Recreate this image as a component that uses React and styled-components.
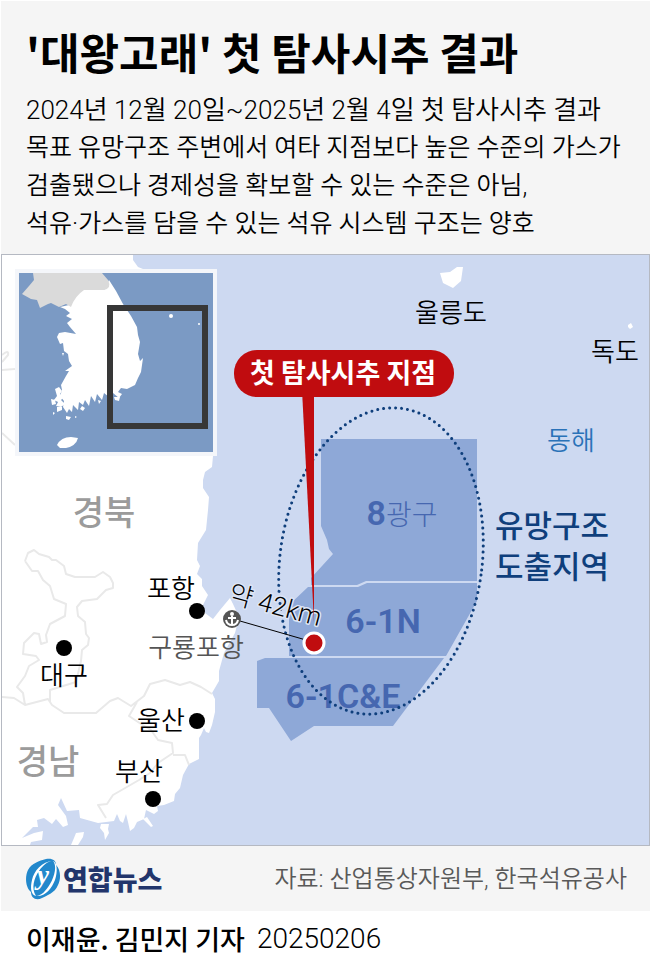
import React from "react";
import styled, { createGlobalStyle } from "styled-components";

const GlobalStyle = createGlobalStyle`
  * { box-sizing: border-box; }
  body {
    margin: 0;
    background: #ffffff;
    color: #000000;
    font-family: "Noto Sans CJK KR", "Noto Sans", sans-serif;
  }
`;

const mixedFont = 'Roboto, "Noto Sans CJK KR", sans-serif';

const Page = styled.main`
  width: 100%;
  padding: 1px 1px 0;
  background: #ffffff;
`;

const Header = styled.header`
  padding: 20px 25px 11px;
  background: #f5f5f5;
`;

const Title = styled.h1`
  margin: 0 0 10px;
  font-size: 43px;
  font-weight: 700;
  line-height: 60px;
`;

const Summary = styled.p`
  margin: 0;
  font-family: ${mixedFont};
  font-size: 25px;
  font-weight: 350;
  line-height: 38px;
`;

const Line = styled.span`
  display: block;
  font-size: ${(p) => (p.$lead ? 26 : 25)}px;
  white-space: nowrap;
`;

const MapFigure = styled.figure`
  margin: 0;
  border: 1px solid #b5b9c2;
  background: #cdd9f1;
`;

const MapDrawing = styled.svg`
  display: block;
  width: 100%;
  height: auto;
`;

const Place = styled.text`
  font-size: ${(p) => p.$size || 26}px;
  font-weight: ${(p) => p.$weight || 350};
  fill: ${(p) => p.$color || "#000000"};
  text-anchor: middle;
`;

const BlockName = styled.text`
  font-family: ${mixedFont};
  font-size: 34px;
  font-weight: 600;
  fill: #4667b0;
  text-anchor: middle;
`;

const Thin = styled.tspan`
  font-size: 28px;
  font-weight: 300;
`;

const Distance = styled.text`
  font-family: ${mixedFont};
  font-size: 26px;
  font-weight: 300;
  fill: #000000;
  stroke: #dde5f5;
  stroke-width: 3px;
  stroke-linejoin: round;
  paint-order: stroke;
  text-anchor: middle;
`;

const SourceBar = styled.section`
  display: flex;
  align-items: center;
  justify-content: space-between;
  min-height: 65px;
  padding: 0 23px 0 24px;
  background: #f5f5f5;
`;

const Brand = styled.div`
  display: flex;
  align-items: center;
  gap: 2px;
  color: #22356b;
  font-size: 27px;
  font-weight: 900;
  line-height: 36px;
`;

const BrandMark = styled.svg`
  width: 36px;
  height: 42px;
`;

const MarkLetter = styled.text`
  font-family: "Liberation Serif", serif;
  font-size: 27px;
  font-style: italic;
  font-weight: 700;
  fill: #ffffff;
  text-anchor: middle;
`;

const Source = styled.p`
  margin: 0;
  color: #595959;
  font-family: ${mixedFont};
  font-size: 24px;
  font-weight: 350;
  line-height: 36px;
`;

const Byline = styled.footer`
  display: flex;
  gap: 12px;
  padding: 8px 25px 15px;
  font-size: 27px;
  line-height: 40px;
`;

const Authors = styled.span`
  font-weight: 500;
`;

const PublishDate = styled.time`
  font-family: ${mixedFont};
  font-size: 28px;
  font-weight: 300;
`;

const cities = [
  { name: "포항", x: 171, y: 598, cx: 197, cy: 611 },
  { name: "대구", x: 64, y: 685, cx: 64, cy: 648 },
  { name: "울산", x: 161, y: 730, cx: 197, cy: 721 },
  { name: "부산", x: 139, y: 781, cx: 153, cy: 799 },
];

function Inset() {
  return (
    <g>
      <rect x="15" y="269" width="202" height="187" fill="#f4f6fa" />
      <rect x="19" y="273" width="194" height="179" fill="#7b9ac4" />
      <path
        fill="#ffffff"
        d="M109 280 L116 291 L123 304 L131 316 L137 327 L138 335 L140 342 L138 354 L140 361 L143 358 L141 372 L138 378 L135 385 L127 389 L121 388 L118 392 L122 394 L119 398 L113 393 L109 397 L104 393 L102 400 L97 394 L95 402 L91 396 L89 406 L85 400 L83 405 L79 402 L78 410 L73 405 L72 412 L69 409 L67 413 L63 407 L64 401 L60 396 L62 390 L61 385 L66 376 L69 371 L65 371 L72 366 L69 361 L68 354 L64 351 L63 343 L60 344 L57 337 L59 333 L65 332 L76 334 L70 327 L67 323 L72 319 L66 316 L70 313 L65 309 L60 307 L69 305 L74 295 L80 290 L104 290 Z"
      />
      <path
        fill="#dadada"
        d="M33 273 L102 273 L108 280 Q112 288 104 290 L84 290 Q75 296 71 307 L66 304 L59 307 L51 303 L48 304 L40 308 L37 300 L31 299 L22 294 L29 286 L34 280 Z"
      />
      <path
        fill="#ffffff"
        d="M55 389 l4-2 3 4-2 3 4 3-3 3 4 4-4 3-5-1 2-4-4-2 3-4zM51 399 l4 1 1 4-4 1zM57 407 l5 0 0 3-5 2zM66 416 l5 1-2 3-3-1zM53 412 l2 1-2 2zM75 416 l2 1-2 1zM82 406l3 2-2 3-3-2zM98 400l3 1-2 3zM114 397l6 0-1 4-4-1zM62 353l2 0-1 3z"
      />
      <path fill="#ffffff" d="M57 445 Q61 437 71 437 L78 438 Q76 446 66 448 L60 448 Z" />
      <circle cx="171" cy="316" r="2" fill="#ffffff" />
      <circle cx="199" cy="324" r="1" fill="#ffffff" />
      <rect x="110" y="308" width="95" height="118" fill="none" stroke="#373737" strokeWidth="6" />
    </g>
  );
}

function Land() {
  return (
    <g>
      <path
        fill="#ffffff"
        d="M2 255 L133 255 L133 260 L138 267 L143 269 L213 269 L213 456 L212 467 L205 472 L203 480 L203 488 L209 497 L208 510 L206 530 L198 543 L197 560 L200 566 L197 574 L202 579 L202 586 L208 595 L203 605 L205 613 L213 619 L220 610 L225 604 L230 598 L233 604 L239 617 L235 633 L224 653 L219 671 L219 681 L212 693 L215 699 L215 712 L212 725 L209 733 L206 732 L204 728 L201 735 L199 738 L199 759 L189 764 L183 775 L180 788 L175 794 L174 801 L164 805 L157 806 L158 811 L154 814 L146 810 L144 819 L137 822 L134 828 L130 831 L128 822 L126 814 L123 823 L120 821 L117 814 L114 821 L98 823 L80 818 L79 810 L67 811 L61 798 L58 805 L66 816 L68 825 L63 827 L56 819 L52 824 L44 818 L37 820 L38 827 L33 827 L22 838 L34 833 L43 831 L42 840 L31 842 L30 845 L2 845 Z"
      />
      <path fill="#ffffff" d="M76 833 l8-1-1 5-5 8h-7l3-7zM101 824l8 0-1 5 1 4-4 7-1-7-4-5zM143 819l4-2 6 9-2 1z" />
      <path
        fill="none"
        stroke="#e9e9e9"
        strokeWidth="2"
        strokeLinejoin="round"
        d="M25 561 L28 553 L34 550 L39 554 L49 557 L52 560 L56 560 L64 566 L66 574 L75 577 L95 577 L103 572 L110 577 L113 583 L113 588 L106 590 L97 599 L82 601 L77 607 L78 616 L85 622 L86 634 L89 638 L88 645 L82 650 L81 661 L76 682 L50 690 L50 702 M25 561 L32 571 L38 571 L43 580 L50 586 L54 599 L66 604 L65 616 L50 624 L46 635 L47 642 L41 644 L39 634 L34 633 L24 643 L23 654 L36 656 L39 660 L29 666 L25 676 L17 687 L23 693 L25 705 L14 698 L2 697 M25 705 L48 699 L52 705 L64 713 L96 713 L110 701 L118 698 L131 706 L144 696 L150 684 L165 680 L180 685 L190 682 L201 687 L212 694 M137 702 L129 716 L141 724 L151 730 L158 740 L172 743 L173 753 L158 763 L150 773 L139 780 L113 795 L107 804 L98 805 L106 818 M173 755 L185 755 L189 765 M2 355 Q9 349 8 355 L2 362 M2 370 L15 369 M2 433 L15 445"
      />
    </g>
  );
}

function HarborIcon() {
  return (
    <g>
      <circle cx="232" cy="619" r="9" fill="#555555" />
      <g fill="none" stroke="#ffffff" strokeWidth="2">
        <circle cx="232" cy="614" r="1" />
        <path d="M232 616v9M228 618h8M226 620q1 5 6 5q5 0 6-5" />
      </g>
    </g>
  );
}

function DrillingMap() {
  return (
    <MapDrawing viewBox="2 255 647 590" role="img" aria-label="첫 탐사시추 지점 지도">
      <Land />
      <Inset />
      <path fill="#ffffff" d="M440 273 L450 272 L457 267 L463 267 L461 281 L453 288 L443 283 Z" />
      <path fill="#ffffff" d="M628 325 l3-2 2 4-3 2-2-2z" />

      <g fill="#8ea8d7">
        <path d="M321 439 H477 V581 H366 L357 585 H311 V578 L333 554 L329 549 L327 540 L321 526 Z" />
        <path d="M308 587 H358 L367 583 H477 V601 L446 656 H289 V605 Z" />
        <path d="M257 661 L265 658 H444 L393 726 H314 L291 741 L269 708 H257 Z" />
      </g>

      <BlockName x="402" y="525">8<Thin>광구</Thin></BlockName>
      <BlockName x="383" y="633">6-1N</BlockName>
      <BlockName x="343" y="708">6-1C&amp;E</BlockName>

      <ellipse
        cx="381"
        cy="561"
        rx="101"
        ry="154"
        transform="rotate(8 381 561)"
        fill="none"
        stroke="#0f3f7c"
        strokeWidth="3"
        strokeLinecap="round"
        strokeDasharray="0 6"
      />

      <path d="M240 621 L306 640" stroke="#000000" strokeWidth="1" />
      <Distance x="0" y="0" transform="translate(273 614) rotate(15)">약 42km</Distance>
      <path d="M302 390 H314 V622 Z" fill="#c00c0f" />
      <rect x="234" y="350" width="220" height="47" rx="23" fill="#c00c0f" />
      <Place x="343" y="383" $size={27} $weight={700} $color="#ffffff">첫 탐사시추 지점</Place>
      <circle cx="314" cy="643" r="10" fill="#c00c0f" stroke="#ffffff" strokeWidth="3" />
      <HarborIcon />

      {cities.map((city) => (
        <g key={city.name}>
          <circle cx={city.cx} cy={city.cy} r="8" />
          <Place x={city.x} y={city.y}>{city.name}</Place>
        </g>
      ))}

      <Place x="451" y="322">울릉도</Place>
      <Place x="615" y="361">독도</Place>
      <Place x="571" y="450" $color="#2a72b8">동해</Place>
      <Place x="196" y="657" $color="#555555">구룡포항</Place>
      <Place x="104" y="525" $size={34} $weight={500} $color="#9b9b9b">경북</Place>
      <Place x="48" y="774" $size={34} $weight={500} $color="#9b9b9b">경남</Place>
      <Place x="552" y="537" $size={31} $weight={500} $color="#0f3f7c">유망구조</Place>
      <Place x="552" y="578" $size={31} $weight={500} $color="#0f3f7c">도출지역</Place>
    </MapDrawing>
  );
}

function NewsMark() {
  return (
    <BrandMark viewBox="0 0 36 42" aria-hidden="true">
      <path
        fill="#2288cc"
        d="M21 1 C27 0 31 2 31 7 C36 12 36 21 33 27 C30 35 21 38 17 40 C11 43 6 40 6 34 C0 29 0 18 3 12 C7 5 14 3 21 1Z"
      />
      <path
        fill="#ffffff"
        d="M28 3 C17 3 9 13 7 22 C5 30 6 37 11 38 C6 30 9 20 14 13 C18 7 23 3 28 3Z M28 3 C32 7 30 18 25 26 C21 33 16 38 11 38 C20 39 27 30 30 22 C33 13 32 4 28 3Z"
      />
      <MarkLetter x="18" y="26">y</MarkLetter>
    </BrandMark>
  );
}

export default function App() {
  return (
    <>
      <GlobalStyle />
      <Page>
        <Header>
          <Title>'대왕고래' 첫 탐사시추 결과</Title>
          <Summary>
            <Line $lead>2024년 12월 20일~2025년 2월 4일 첫 탐사시추 결과</Line>
            <Line>목표 유망구조 주변에서 여타 지점보다 높은 수준의 가스가</Line>
            <Line>검출됐으나 경제성을 확보할 수 있는 수준은 아님,</Line>
            <Line>석유·가스를 담을 수 있는 석유 시스템 구조는 양호</Line>
          </Summary>
        </Header>
        <MapFigure>
          <DrillingMap />
        </MapFigure>
        <SourceBar>
          <Brand>
            <NewsMark />
            <span>연합뉴스</span>
          </Brand>
          <Source>자료: 산업통상자원부, 한국석유공사</Source>
        </SourceBar>
        <Byline>
          <Authors>이재윤. 김민지 기자</Authors>
          <PublishDate dateTime="2025-02-06">20250206</PublishDate>
        </Byline>
      </Page>
    </>
  );
}
